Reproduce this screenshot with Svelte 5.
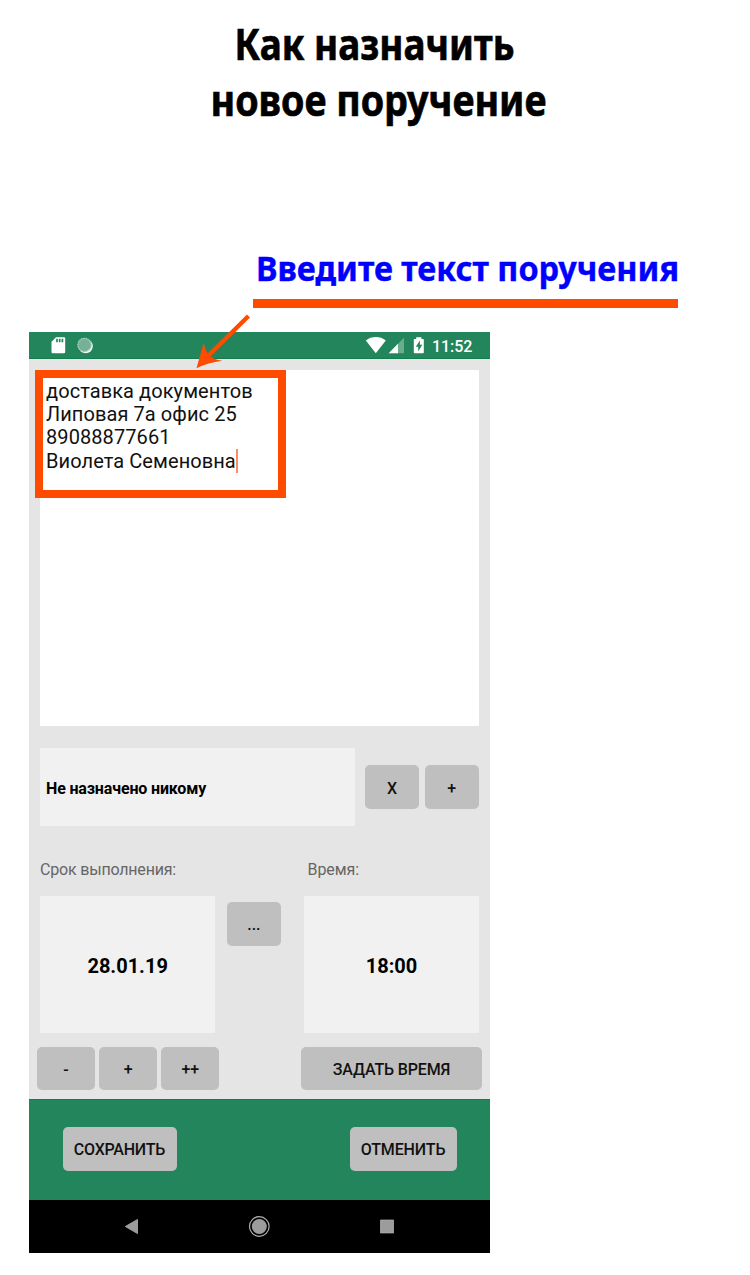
<script>
  const steps = ['-', '+', '++'];
  const lines = ['доставка документов', 'Липовая 7а офис 25', '89088877661', 'Виолета Семеновна'];
</script>

<main class="page">
  <svg class="title" width="750" height="332" viewBox="0 0 750 332">
    <g font-size="43.5" fill="#000" stroke="#000" stroke-width=".7">
      <text x="234.500" y="60.300" textLength="280" lengthAdjust="spacingAndGlyphs">Как назначить</text>
      <text x="210.500" y="115.700" textLength="336" lengthAdjust="spacingAndGlyphs">новое поручение</text>
    </g>
    <text x="256" y="281.300" font-size="34" fill="#00f" stroke="#00f" stroke-width=".4" textLength="423" lengthAdjust="spacingAndGlyphs">Введите текст поручения</text>
    <rect x="253" y="299" width="425" height="9" fill="#ff4b00" />
  </svg>

  <section class="phone">
    <header class="status">
      <svg width="461" height="27" viewBox="0 0 461 27">
        <path d="M27 5.200h8a1.200 1.200 0 0 1 1.200 1.200v13.700a1.200 1.200 0 0 1-1.200 1.200H23.700a1.200 1.200 0 0 1-1.200-1.200V9.700z" fill="#fff" />
        <path d="M28 6.800v3.400M30.700 6.800v3.400M33.400 6.800v3.400" stroke="#22855b" stroke-width="1.700" />
        <circle cx="56.700" cy="14.200" r="7.100" fill="#f1f8f5" />
        <circle cx="55.500" cy="12.900" r="7" fill="#76b196" />
        <circle cx="55.500" cy="12.900" r="6.600" fill="none" stroke="#b5d8c8" stroke-width="1.200" stroke-dasharray="1 0.700" />
        <path d="M336.800 8.400c5.600-4.500 14.400-4.500 20 0L346.800 21.200z" fill="#fff" />
        <path d="M375 5.800v15.400h-15.300z" fill="#6aad8d" />
        <path d="M369 11.800v9.400h-9.300z" fill="#fff" />
        <path d="M387.200 5.300v1.600h-1.700a.7.700 0 0 0-.7.700v13a.7.700 0 0 0 .7.700h8.600a.7.700 0 0 0 .7-.7v-13a.7.700 0 0 0-.7-.7h-1.700V5.300z" fill="#fff" />
        <path d="M390.900 8.500l-4.100 6.300h2.400v4.600l4.100-6.600h-2.400z" fill="#22855b" />
      </svg>
      <span class="clock">11:52</span>
    </header>

    <div class="body">
      <div class="note">
        {#each lines as line, i}
          <div class="line">{line}{#if i === 3}<i class="caret"></i>{/if}</div>
        {/each}
      </div>

      <div class="assign">
        <div class="who">Не назначено никому</div>
        <button class="small">X</button>
        <button class="small">+</button>
      </div>

      <div class="labels"><span class="due">Срок выполнения:</span><span class="time">Время:</span></div>

      <div class="fields">
        <div class="value date">28.01.19</div>
        <button class="small">...</button>
        <div class="value hour">18:00</div>
      </div>

      <div class="steps">
        {#each steps as s}<button>{s}</button>{/each}
        <button class="set">ЗАДАТЬ ВРЕМЯ</button>
      </div>
    </div>

    <footer class="actions">
      <button class="save">СОХРАНИТЬ</button>
      <button class="cancel">ОТМЕНИТЬ</button>
    </footer>

    <nav>
      <svg width="461" height="54" viewBox="0 0 461 54">
        <path d="M96.300 26.500L108.500 19.500v14z" fill="#9c9c9c" stroke="#9c9c9c" stroke-linejoin="round" />
        <circle cx="230.300" cy="26.500" r="9.800" fill="none" stroke="#b0b0b0" stroke-width="1.200" />
        <circle cx="230.300" cy="26.500" r="7.500" fill="#9c9c9c" />
        <rect x="351.300" y="19.800" width="13.400" height="13.400" fill="#9c9c9c" />
        <rect x="351.700" y="20.200" width="12.600" height="12.600" fill="none" stroke="#aaa" stroke-width=".8" />
      </svg>
    </nav>
  </section>

  <div class="frame"></div>
  <svg class="arrow" width="60" height="60" viewBox="0 0 60 60">
    <path d="M53.500 6L12 47" stroke="#ff4b00" stroke-width="4.400" />
    <path d="M1.500 58.200L8.700 32.700Q10.500 41 14.500 46Q19 49.500 27.200 50.700Q13 52.500 1.500 58.200z" fill="#ff4b00" />
  </svg>
</main>

<style>
  :global(body) { margin: 0; background: #fff; }
  .page { position: relative; width: 750px; height: 1275px; overflow: hidden; font-family: Roboto, sans-serif; color: #000; }
  .title { display: block; font-family: "Noto Sans", sans-serif; font-weight: 700; }
  svg { display: block; }
  .phone { width: 461px; height: 921px; margin-left: 29px; display: flex; flex-direction: column; background: #e5e5e5; }
  .status { display: flex; height: 27px; background: #22855b; box-shadow: inset 0 -1px #147d4d; }
  .status svg { flex: none; }
  .clock { width: 60px; margin-left: -58px; font-size: 16px; font-weight: 500; line-height: 29px; letter-spacing: -.05px; color: #fff; }
  .body { height: 739.500px; box-sizing: border-box; padding: 11px 8px 0; }
  .note { width: 439px; height: 355.500px; margin-left: 3px; box-sizing: border-box; padding: 9.500px 6px; background: #fff; color: #111; font-size: 20px; line-height: 23.400px; letter-spacing: .08px; }
  .line { display: flex; align-items: center; height: 23.400px; white-space: pre; }
  .caret { width: 2px; height: 24px; background: #ff8a63; }
  .assign { display: flex; align-items: center; height: 78px; margin: 22.500px 3px 0; }
  .who { width: 314.500px; height: 78px; box-sizing: border-box; padding-left: 6px; margin-right: 10.500px; background: #f1f1f1; font-size: 16px; font-weight: 700; line-height: 81px; letter-spacing: -.15px; }
  button { padding: 2px 0 0; border: 0; border-radius: 5px; background: #bfbfbf; color: #111; font: 500 16px Roboto, sans-serif; letter-spacing: -.15px; height: 43.500px; width: 57.700px; }
  .small { width: 54px; flex: none; }
  .assign .small + .small { margin-left: 5.500px; }
  .labels { display: flex; height: 70px; margin-left: 3px; font-size: 16px; line-height: 88px; letter-spacing: -.19px; color: #666; }
  .due { width: 267.500px; }
  .time { letter-spacing: -.05px; }
  .fields { display: flex; height: 137px; margin-left: 3px; }
  .value { background: #f1f1f1; font-size: 20px; font-weight: 700; line-height: 140px; text-align: center; width: 175.300px; }
  .fields .small { margin: 6px 23.500px 0 11.500px; }
  .fields .hour { width: 174.500px; }
  .steps { display: flex; gap: 4.500px; margin-top: 13.500px; }
  .steps .set { width: 181px; margin-left: auto; }
  .actions { display: flex; justify-content: space-between; height: 101px; box-sizing: border-box; padding: 28.500px 33.500px 0; background: #22855b; box-shadow: inset 0 1px #147d4d; }
  .save { width: 114px; letter-spacing: -.22px; }
  .cancel { width: 107px; }
  nav { height: 53.500px; background: #000; overflow: hidden; }
  .frame { position: absolute; left: 35px; top: 369.500px; width: 251px; height: 128.500px; box-sizing: border-box; border: 8px solid #ff4b00; }
  .arrow { position: absolute; left: 195px; top: 310px; }
</style>
